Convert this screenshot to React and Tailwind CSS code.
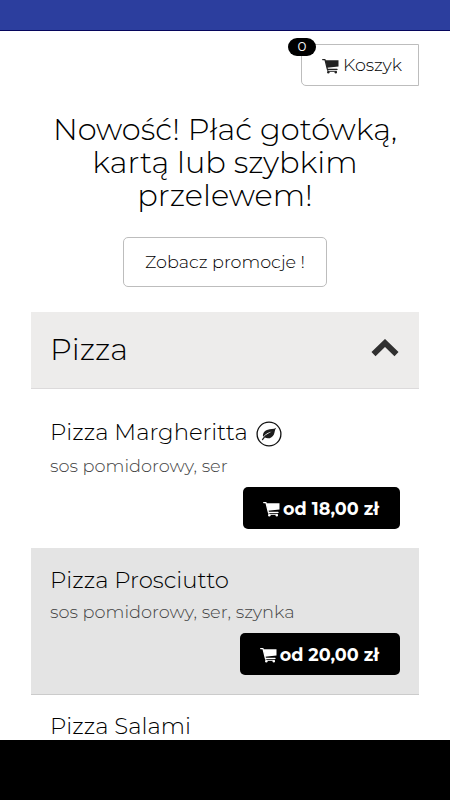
function Cart({ className = "", fill = "#222" }) {
  return (
    <svg viewBox="0 0 17 16" className={"h-4 w-[17px] shrink-0 " + className} aria-hidden="true">
      <path d="M0.7 1.6H3L5.4 11.4H15" fill="none" stroke={fill} strokeWidth="1.3" strokeLinecap="round" strokeLinejoin="round" />
      <path d="M3.4 2.3H16.5V8.6L5 9.8Z" fill={fill} />
      <path d="M5.8 11V13.3H14.8" fill="none" stroke={fill} strokeWidth="1" />
      <circle cx="6.3" cy="14.2" r="1.2" fill={fill} />
      <circle cx="13.8" cy="14.2" r="1.2" fill={fill} />
    </svg>
  );
}

function Leaf() {
  return (
    <svg viewBox="0 0 26 26" className="mt-[5px] ml-2 h-[26px] w-[26px]" aria-hidden="true">
      <circle cx="13" cy="13" r="11.9" fill="#fff" stroke="#111" strokeWidth="1.3" />
      <path
        d="M20.2 6.8C17.5 8.6 14.6 7.4 11 8.9C7.7 10.3 6.3 13.2 7.2 15.8C9.8 12.5 12.4 11.7 15.7 10.6C12.4 12.7 8.8 13.8 6 18.3C5.6 19.1 6.4 19.6 7 18.9L8.9 16.6C12.6 18.4 16.4 16.6 17.9 13.4C18.9 11.2 18.7 8.6 20.2 6.8Z"
        fill="#1c1c1c"
      />
    </svg>
  );
}

function Price({ children }) {
  return (
    <button className="mr-[19px] flex h-[42px] items-center self-end rounded-[5px] bg-black pt-[2px] pr-[21px] pl-5 text-[17.6px] font-bold text-white">
      <Cart className="mr-[3px]" fill="#fff" />
      <span className="whitespace-nowrap">{children}</span>
    </button>
  );
}

export default function App() {
  return (
    <div className="flex h-[800px] w-[450px] flex-col overflow-hidden bg-black font-['Montserrat','Inter',sans-serif] font-light text-black">
      <div className="h-[31px] shrink-0 border-b border-[#06065c] bg-[#2c3e9e]" />
      <main className="flex h-[709px] shrink-0 flex-col overflow-hidden bg-white px-[31px]">
        <div className="relative mt-[13px] flex h-[42px] w-[118px] shrink-0 items-center self-end rounded-bl-[5px] border border-[#bdbdbd] pt-px pl-5">
          <Cart className="mt-px mr-[4px]" />
          <span className="text-[17.5px]">Koszyk</span>
          <span className="absolute -top-[7px] -left-[14px] flex h-[18px] w-7 items-center justify-center rounded-full bg-black pb-px text-[13.5px] font-normal text-white">
            0
          </span>
        </div>

        <h1 className="mt-[27px] text-center text-[30.45px] leading-[33px]">
          Nowość! Płać gotówką, kartą lub szybkim przelewem!
        </h1>

        <button className="mt-[25px] flex h-[50px] w-[204px] shrink-0 items-center justify-center self-center rounded-[5px] border border-[#bdbdbd] text-[17.6px]">
          Zobacz promocje !
        </button>

        <div className="mt-[25px] flex h-[77px] shrink-0 items-center justify-between border-b border-[#dcdadb] bg-[#edeceb] pr-5 pl-[19px]">
          <h2 className="text-[30.4px]">Pizza</h2>
          <svg viewBox="0 0 28 18" className="mb-1 h-[18px] w-7" aria-hidden="true">
            <path d="M2.5 15.2L14 4L25.5 15.2" fill="none" stroke="#303030" strokeWidth="5.8" />
          </svg>
        </div>

        <section className="flex h-[159px] shrink-0 flex-col pt-[27px] pl-[19px]">
          <h3 className="flex h-8 text-[22.8px] leading-8">
            <span>Pizza Margheritta</span>
            <Leaf />
          </h3>
          <p className="mt-[6px] mb-[9px] text-[17.75px] leading-6 text-[#444]">sos pomidorowy, ser</p>
          <Price>od 18,00 zł</Price>
        </section>

        <section className="flex h-[147px] shrink-0 flex-col border-b border-[#cbcbcb] bg-[#e4e4e4] pt-4 pl-[19px]">
          <h3 className="text-[22.8px] leading-8">Pizza Prosciutto</h3>
          <p className="mt-1 mb-[9px] text-[17.75px] leading-6 text-[#444]">sos pomidorowy, ser, szynka</p>
          <Price>od 20,00 zł</Price>
        </section>

        <section className="shrink-0 pt-[15px] pl-[19px]">
          <h3 className="text-[22.8px] leading-8">Pizza Salami</h3>
        </section>
      </main>
    </div>
  );
}
